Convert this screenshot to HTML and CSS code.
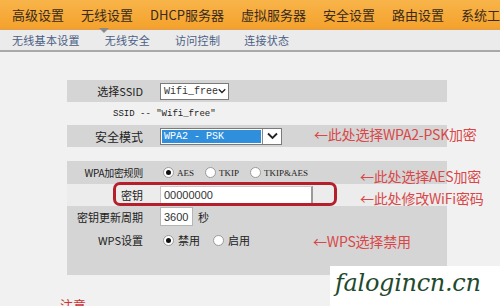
FILE: index.html
```html
<!DOCTYPE html>
<html lang="zh-CN">
<head>
  <meta charset="UTF-8">
  <title>无线安全设置</title>
  <link rel="stylesheet" href="styles.css">
</head>
<body>
  <div class="topnav">
    <span>高级设置</span>
    <span class="cur">无线设置</span>
    <span>DHCP服务器</span>
    <span>虚拟服务器</span>
    <span>安全设置</span>
    <span>路由设置</span>
    <span>系统工具</span>
  </div>
  <div class="subnav">
    <span class="s1">无线基本设置</span>
    <span class="s2">无线安全</span>
    <span class="s3">访问控制</span>
    <span class="s4">连接状态</span>
  </div>

  <div class="content">
    <div class="panel">
      <div class="row gray">
        <div class="lbl">选择SSID</div>
        <div class="ctl">
          <div class="sel sel-ssid">Wifi_free
            <svg width="11" height="8" viewBox="0 0 11 8"><path d="M1 1.5 L5.5 6 L10 1.5" fill="none" stroke="#222" stroke-width="1.8"/></svg>
          </div>
        </div>
      </div>
      <div class="row note">SSID -- "Wifi_free"</div>
      <div class="row gray">
        <div class="lbl big">安全模式</div>
        <div class="ctl">
          <div class="sel sel-mode">
            <span class="val">WPA2 - PSK</span>
            <span class="drop"><svg width="11" height="8" viewBox="0 0 11 8"><path d="M1 1.5 L5.5 6 L10 1.5" fill="none" stroke="#222" stroke-width="1.8"/></svg></span>
          </div>
        </div>
      </div>

      <div class="section">
        <div class="row r-wpa">
          <div class="lbl small">WPA加密规则</div>
          <div class="ctl radios">
            <label class="rd"><i class="dot on"></i>AES</label>
            <label class="rd"><i class="dot"></i>TKIP</label>
            <label class="rd"><i class="dot"></i>TKIP&amp;AES</label>
          </div>
        </div>
        <div class="row r-key">
          <div class="lbl">密钥</div>
          <div class="ctl"><div class="inp inp-key">00000000</div></div>
        </div>
        <div class="row r-period">
          <div class="lbl">密钥更新周期</div>
          <div class="ctl"><div class="inp inp-period">3600</div><span class="unit">秒</span></div>
        </div>
        <div class="row r-wps">
          <div class="lbl">WPS设置</div>
          <div class="ctl radios">
            <label class="rd"><i class="dot on"></i>禁用</label>
            <label class="rd"><i class="dot"></i>启用</label>
          </div>
        </div>
      </div>
    </div>

    <div class="notice">注意</div>

    <div class="mark-box"></div>
    <div class="tip tip-mode">←此处选择WPA2-PSK加密</div>
    <div class="tip tip-aes">←此处选择AES加密</div>
    <div class="tip tip-key">←此处修改WiFi密码</div>
    <div class="tip tip-wps">←WPS选择禁用</div>
    <div class="watermark">falogincn.cn</div>
  </div>
</body>
</html>
```

FILE: styles.css
```css
body {
  margin: 0;
  width: 500px;
  height: 306px;
  overflow: hidden;
  background-color: #f1f1f1;
  font-family: "Noto Sans CJK SC", sans-serif;
}

.topnav {
  height: 28px;
  display: flex;
  align-items: center;
  gap: 17px;
  padding-left: 12px;
  background: linear-gradient(#f8b44a, #f4a22c);
  border-bottom: 2px solid #e8a040;
  white-space: nowrap;
  overflow: hidden;
}

.topnav span {
  font-size: 13px;
  color: #3a2a1a;
}

.subnav {
  position: relative;
  height: 20px;
  display: flex;
  align-items: center;
  background-color: #ebebeb;
  border-bottom: 2px solid #a9a9a9;
  font-size: 11px;
  color: #4a5f86;
}

.subnav span {
  letter-spacing: 0.3px;
}

.subnav .s1 { margin-left: 12px; }
.subnav .s2 { margin-left: 25px; }
.subnav .s3 { margin-left: 25px; }
.subnav .s4 { margin-left: 24px; }

.subnav::before {
  content: "";
  position: absolute;
  left: 99px;
  top: -2px;
  border-left: 5px solid transparent;
  border-right: 5px solid transparent;
  border-top: 5px solid #8a8a8a;
}

.content {
  position: relative;
  padding-top: 28px;
  height: 226px;
  overflow: hidden;
}

.panel {
  margin-left: 67px;
  width: 380px;
}

.row {
  display: flex;
  align-items: center;
}

.gray {
  height: 22px;
  background-color: #d5d5d5;
}

.lbl {
  width: 76px;
  text-align: right;
  font-size: 11px;
  color: #222;
  flex-shrink: 0;
}

.lbl.big {
  font-size: 12px;
}

.lbl.small {
  font-size: 10px;
  letter-spacing: -0.3px;
}

.ctl {
  margin-left: 17px;
  display: flex;
  align-items: center;
}

.sel {
  height: 15px;
  display: flex;
  align-items: center;
  background-color: #fff;
  border: 1px solid #7a7a7a;
  font-family: "Liberation Mono", monospace;
  font-size: 10px;
  color: #333;
}

.sel-ssid {
  width: 62px;
  padding-left: 3px;
  justify-content: space-between;
  padding-right: 2px;
}

.sel-mode {
  width: 120px;
  padding: 0;
}

.sel-mode .val {
  flex: 1;
  height: 13px;
  margin: 1px;
  padding-left: 2px;
  background-color: #2f8fdc;
  color: #fff;
  line-height: 13px;
}

.sel-mode .drop {
  width: 18px;
  height: 15px;
  display: flex;
  align-items: center;
  justify-content: center;
  border-left: 1px solid #888;
}

.note {
  height: 23px;
  padding-left: 46px;
  font-family: "Liberation Mono", monospace;
  font-size: 9px;
  color: #222;
}

.section {
  margin-top: 14px;
  height: 114px;
  background-color: #d5d5d5;
}

.r-wpa {
  height: 23px;
}

.r-key {
  height: 22px;
  background-color: #ececec;
}

.r-period {
  height: 21px;
}

.r-wps {
  height: 26px;
}

.radios {
  gap: 11px;
  padding-left: 3px;
}

.rd {
  display: flex;
  align-items: center;
  gap: 3px;
  font-family: "Liberation Serif", serif;
  font-size: 9px;
  color: #222;
}

.r-wps .rd {
  font-family: "Noto Sans CJK SC", sans-serif;
  font-size: 11px;
  gap: 4px;
}

.r-wps .radios {
  gap: 13px;
}

.dot {
  width: 9px;
  height: 9px;
  border-radius: 50%;
  border: 1px solid #9a9a9a;
  background-color: #fff;
  position: relative;
}

.dot.on::after {
  content: "";
  position: absolute;
  left: 2px;
  top: 2px;
  width: 5px;
  height: 5px;
  border-radius: 50%;
  background-color: #111;
}

.inp {
  height: 18px;
  display: flex;
  align-items: center;
  background-color: #fff;
  border: 1px solid #b5b5b5;
  font-family: "Liberation Sans", sans-serif;
  font-size: 11px;
  color: #333;
  padding-left: 3px;
  box-sizing: border-box;
}

.inp-key {
  width: 153px;
  border-color: #c8c8c8;
  border-right: 2px solid #9a9a9a;
}

.inp-period {
  width: 33px;
  height: 19px;
}

.unit {
  margin-left: 5px;
  font-size: 11px;
  color: #222;
}

.notice {
  margin-top: 20px;
  margin-left: 60px;
  font-size: 13px;
  color: #c33;
}

.tip {
  position: absolute;
  font-size: 14px;
  color: #d94848;
  white-space: nowrap;
  font-family: "Noto Sans CJK SC", sans-serif;
  letter-spacing: -0.2px;
}

.tip-mode { left: 314px; top: 72px; }
.tip-aes { left: 360px; top: 114px; }
.tip-key { left: 360px; top: 136px; }
.tip-wps { left: 313px; top: 179px; }

.mark-box {
  position: absolute;
  left: 113px;
  top: 130px;
  width: 218px;
  height: 18px;
  border: 3px solid #b51f2c;
  border-radius: 7px;
}

.watermark {
  position: absolute;
  left: 330px;
  top: 214px;
  width: 170px;
  height: 40px;
  background-color: #fff;
  font-family: "DejaVu Serif", serif;
  font-style: italic;
  font-size: 24px;
  color: #1f4a2e;
  padding-left: 5px;
  line-height: 34px;
  box-sizing: border-box;
  letter-spacing: -0.3px;
}
```
